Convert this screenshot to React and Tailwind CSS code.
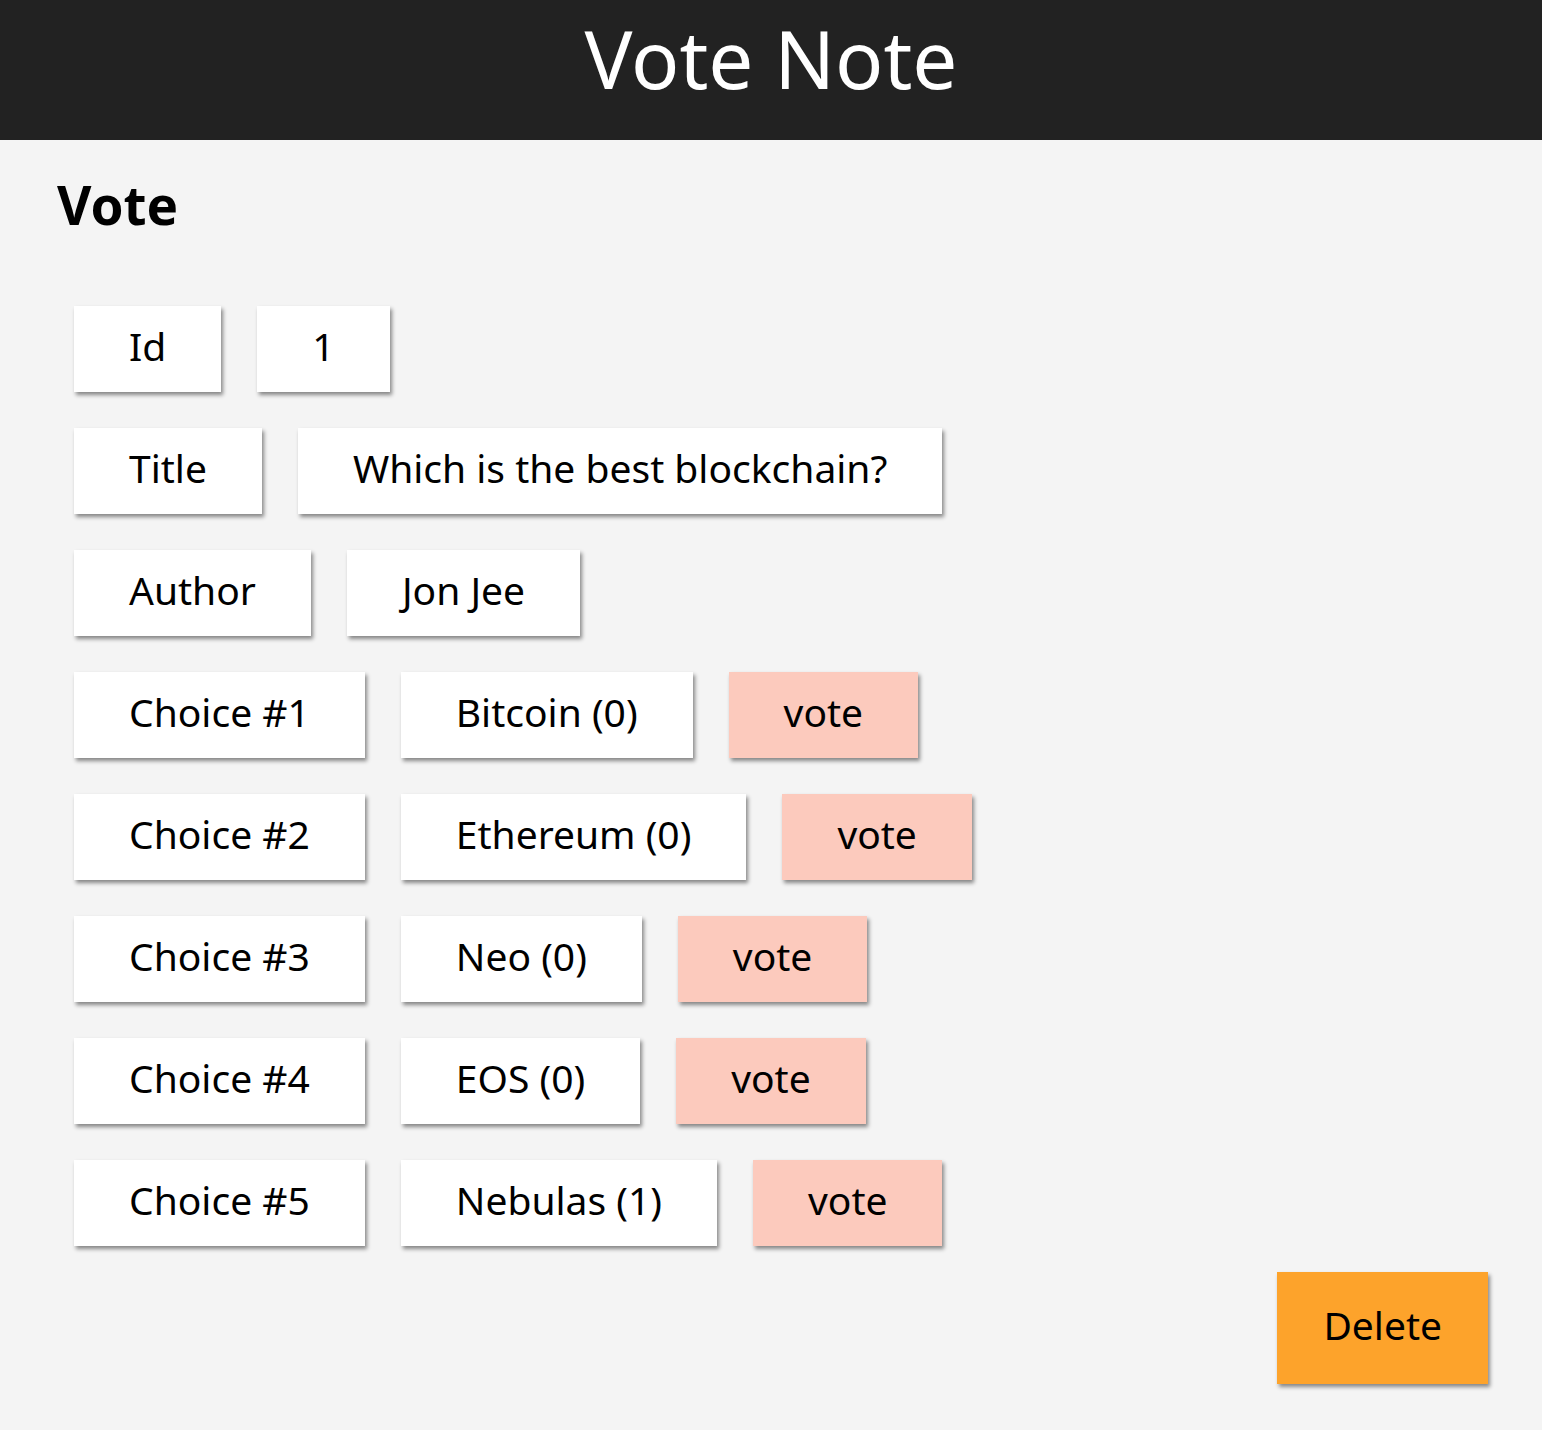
import React from 'react';

const rows = [
  { label: 'Id', value: '1' },
  { label: 'Title', value: 'Which is the best blockchain?' },
  { label: 'Author', value: 'Jon Jee' },
  { label: 'Choice #1', value: 'Bitcoin (0)', vote: true },
  { label: 'Choice #2', value: 'Ethereum (0)', vote: true },
  { label: 'Choice #3', value: 'Neo (0)', vote: true },
  { label: 'Choice #4', value: 'EOS (0)', vote: true },
  { label: 'Choice #5', value: 'Nebulas (1)', vote: true },
];

function Box({ children, className = 'bg-white' }) {
  return (
    <div className={`h-[86px] px-[55px] pb-[6px] flex items-center text-[39px] text-black shadow-[2px_3px_4px_rgba(0,0,0,0.45)] ${className}`}>
      {children}
    </div>
  );
}

export default function App() {
  return (
    <div className="min-h-[1430px] bg-[#f4f4f4] font-['Noto_Sans','Open_Sans',sans-serif]">
      <header className="h-[140px] bg-[#222222] flex justify-center">
        <h1 className="text-white text-[80px] leading-none pt-[18px]">Vote Note</h1>
      </header>

      <main className="px-[57px] pt-[38px]">
        <h2 className="text-[53px] font-bold leading-none text-black">Vote</h2>

        <div className="mt-[75px] pl-[17px] flex flex-col gap-[36px]">
          {rows.map(row => (
            <div key={row.label} className="flex gap-[36px]">
              <Box>{row.label}</Box>
              <Box>{row.value}</Box>
              {row.vote && (
                <button className="h-[86px] px-[55px] pb-[6px] flex items-center text-[39px] text-black bg-[#fccabd] shadow-[2px_3px_4px_rgba(0,0,0,0.45)]">
                  vote
                </button>
              )}
            </div>
          ))}
        </div>

        <div className="flex justify-end mt-[26px] -mr-[3px]">
          <button className="h-[112px] px-[46px] pb-[6px] text-[39px] text-black bg-[#fda32b] shadow-[2px_3px_4px_rgba(0,0,0,0.45)]">
            Delete
          </button>
        </div>
      </main>
    </div>
  );
}
